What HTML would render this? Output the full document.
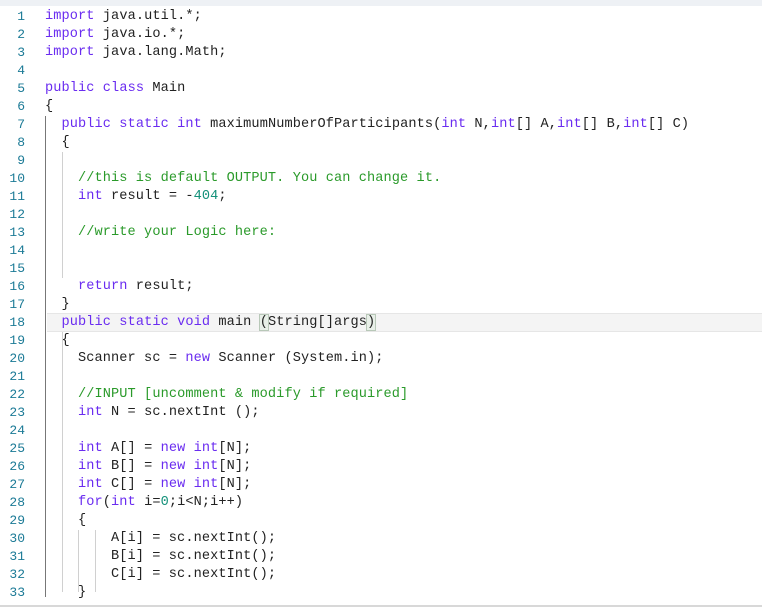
<!DOCTYPE html><html><head><style>
body{margin:0;width:762px;height:607px;background:#fff;position:relative;overflow:hidden;font-family:"Liberation Mono",monospace;font-size:13.6px;letter-spacing:0.1px}
.top{position:absolute;left:0;top:0;width:762px;height:6px;background:#eef1f5}
.bot{position:absolute;left:0;top:605px;width:762px;height:2px;background:#d8d8d8}
.ln{position:absolute;left:0;width:25px;text-align:right;color:#1b7a96;font-size:13px;letter-spacing:0}
.c{position:absolute;left:45px;white-space:pre;color:#222}
.k{color:#6a2cf0}.g{color:#2a9a2a}.n{color:#14917a}
.v{position:absolute;width:1px;background:#d0d0d0}
.hl{position:absolute;left:47px;top:313px;width:715px;height:17px;background:#f4f4f4;border-top:1px solid #e6e6e6;border-bottom:1px solid #e6e6e6}
.br{outline:1px solid #b8c8b8;background:#e8efe8}
</style></head><body>
<div class="top"></div>
<div class="hl"></div>
<div class="v" style="left:45px;top:116px;height:481px;background:#777"></div>
<div class="v" style="left:62px;top:152px;height:126px"></div>
<div class="v" style="left:62px;top:332px;height:260px"></div>
<div class="v" style="left:78px;top:530px;height:62px"></div>
<div class="v" style="left:95px;top:530px;height:62px"></div>
<div id="code"></div>
<div class="bot"></div>
<script>
var L=[
'<span class="k">import</span> java.util.*;',
'<span class="k">import</span> java.io.*;',
'<span class="k">import</span> java.lang.Math;',
'',
'<span class="k">public class</span> Main',
'{',
'  <span class="k">public static int</span> maximumNumberOfParticipants(<span class="k">int</span> N,<span class="k">int</span>[] A,<span class="k">int</span>[] B,<span class="k">int</span>[] C)',
'  {',
'',
'    <span class="g">//this is default OUTPUT. You can change it.</span>',
'    <span class="k">int</span> result = -<span class="n">404</span>;',
'',
'    <span class="g">//write your Logic here:</span>',
'',
'',
'    <span class="k">return</span> result;',
'  }',
'  <span class="k">public static void</span> main <span class="br">(</span>String[]args<span class="br">)</span>',
'  {',
'    Scanner sc = <span class="k">new</span> Scanner (System.in);',
'',
'    <span class="g">//INPUT [uncomment &amp; modify if required]</span>',
'    <span class="k">int</span> N = sc.nextInt ();',
'',
'    <span class="k">int</span> A[] = <span class="k">new int</span>[N];',
'    <span class="k">int</span> B[] = <span class="k">new int</span>[N];',
'    <span class="k">int</span> C[] = <span class="k">new int</span>[N];',
'    <span class="k">for</span>(<span class="k">int</span> i=<span class="n">0</span>;i&lt;N;i++)',
'    {',
'        A[i] = sc.nextInt();',
'        B[i] = sc.nextInt();',
'        C[i] = sc.nextInt();',
'    }'];
var h='';
for(var i=0;i<L.length;i++){var t=8+i*18;
h+='<div class="ln" style="top:'+t+'px;line-height:18px">'+(i+1)+'</div><div class="c" style="top:'+t+'px;line-height:18px">'+L[i].replace(/^( +)/,function(m){return m.replace(/ /g,'<span style="display:inline-block;width:8.25px"></span>')})+'</div>';}
document.getElementById('code').innerHTML=h;
</script>
</body></html>
